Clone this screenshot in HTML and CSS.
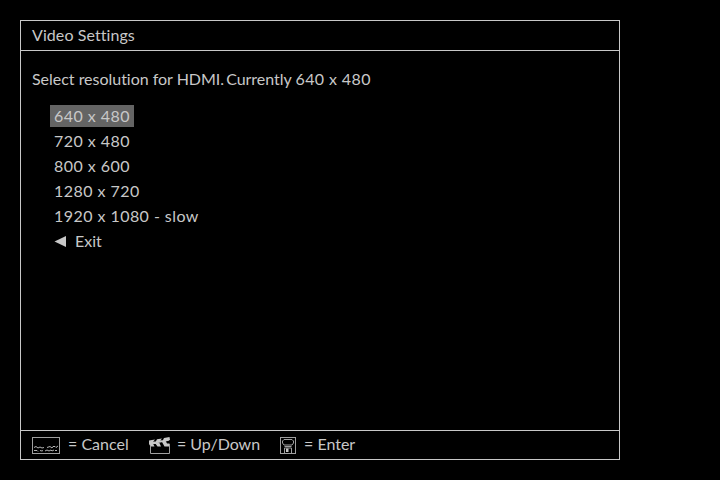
FILE: index.html
```
<!DOCTYPE html>
<html lang="en">
<head>
<meta charset="utf-8">
<title>Video Settings</title>
<link rel="stylesheet" href="styles.css">
</head>
<body>
<main class="window">
  <header class="title">Video Settings</header>
  <section class="content">
    <p class="prompt">Select resolution for HDMI. <span class="current">Currently</span> <span class="size">640 x 480</span></p>
    <ul class="menu">
      <li class="selected">640 x 480</li>
      <li>720 x 480</li>
      <li>800 x 600</li>
      <li>1280 x 720</li>
      <li>1920 x 1080 - slow</li>
      <li class="exit"><svg class="arrow" width="12" height="12" viewBox="0 0 12 12"><path d="M.5 6.500 12 1V12Z"/></svg><span>Exit</span></li>
    </ul>
  </section>
  <footer class="hints">
    <div class="hint cancel">
      <svg class="icon" width="28" height="17" viewBox="0 0 28 17"><rect x=".5" y=".5" width="27" height="16" class="frame"/><path class="fine" d="M2 10.500 4 9.500 6 11 8 10l2 1 2-.5M15 10.500l3-1 2 1.500 1-1.500h2l1 1 2-1.500M2 13.500h3l1 1M8 13.500l2 .5 1-.5M13 14l2-1 2 1 2-1 1 1 2-1M23 13.500h2"/></svg>
      <span>= Cancel</span>
    </div>
    <div class="hint move">
      <svg class="icon" width="22" height="17" viewBox="0 0 22 17"><path class="solid" d="M0 3.500 6 2.500 3.500 5.500 5.500 9.500H1.500L0 7ZM8 2.200 13 1.400 10 5 12 9.500H8.500L6 6ZM15 1 20.500 0 21 3 17 4.500 18 6.500H20.500V9.500H15.500L13 5ZM3 5l17-3v1.800L4 7Z"/><path class="frame" d="M1.500 8.500V16.500H20.500V7"/></svg>
      <span>= Up/Down</span>
    </div>
    <div class="hint enter">
      <svg class="icon" width="16" height="17" viewBox="0 0 16 17"><rect class="frame" x=".5" y=".5" width="15" height="16"/><path class="frame" d="M4 2.500h8l1.500 1.500v2L12 8H4L2.500 6V4ZM4.500 9.500h7M4.500 16v-5h7v5"/><path class="solid" d="M6 11.500h2.500V15H6Z"/></svg>
      <span>= Enter</span>
    </div>
  </footer>
</main>
</body>
</html>
```
FILE: styles.css
```
* { box-sizing: border-box; }
body {
  margin: 0;
  padding: 20px;
  height: 480px;
  overflow: hidden;
  background: #000;
  color: #c8c8c8;
  font: 16px/24px Lato, "Open Sans", sans-serif;
  font-variant-ligatures: none;
}
.window {
  display: flex;
  flex-direction: column;
  width: 600px;
  height: 440px;
  border: 1px solid #c8c8c8;
}
.title {
  height: 30px;
  padding: 2px 11px;
  border-bottom: 1px solid #c8c8c8;
  letter-spacing: .08px;
}
.content { flex: 1; padding: 16px 11px; }
.prompt { margin: 0; letter-spacing: -.02px; }
.current { margin-left: -2px; }
.size { letter-spacing: .4px; }
.menu {
  display: flex;
  flex-direction: column;
  align-items: flex-start;
  gap: 3px;
  margin: 14px 0 0 18px;
  padding: 0;
  list-style: none;
}
.menu li { height: 22px; padding: 0 4px; line-height: 22px; letter-spacing: .45px; }
.menu .selected { width: 84px; background: #646464; }
.menu .exit { display: flex; align-items: center; gap: 9px; letter-spacing: 0; }
.arrow { fill: #c8c8c8; }
.hints {
  display: flex;
  height: 29px;
  padding: 1px 11px;
  border-top: 1px solid #c8c8c8;
}
.hint { display: flex; align-items: flex-start; }
.icon { margin-top: 5px; flex: none; }
.cancel { width: 117px; gap: 8px; }
.move { width: 131px; gap: 6px; letter-spacing: -.05px; }
.enter { gap: 8px; }
.frame { fill: none; stroke: #a0a0a0; stroke-width: 1; }
.fine { fill: none; stroke: #c8c8c8; stroke-width: .9; }
.solid { fill: #c8c8c8; }
```
